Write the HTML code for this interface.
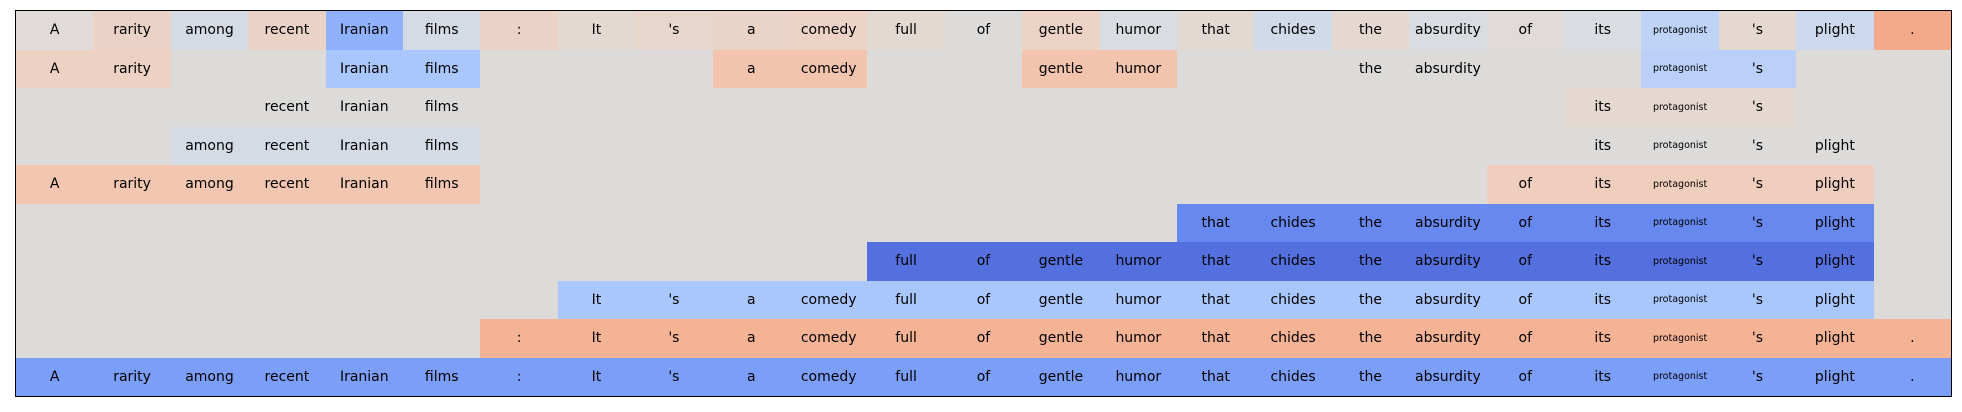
<!DOCTYPE html>
<html><head><meta charset="utf-8"><style>
html,body{margin:0;padding:0;background:#fff;width:1962px;height:412px;overflow:hidden}
#g{position:absolute;left:15px;top:10px;width:1937px;height:387px;border:1px solid #000;box-sizing:border-box;background:#dcdbda;display:grid;grid-template-columns:repeat(25,1fr);grid-template-rows:repeat(10,1fr)}
#g div{display:flex;align-items:center;justify-content:center;font-family:"DejaVu Sans","Liberation Sans",sans-serif;font-size:14px;color:#000;white-space:nowrap}
#g div.p{font-size:9.5px}
</style></head><body><div id="g">
<div style="grid-area:1/1;background:#e0dbd8">A</div>
<div style="grid-area:1/2;background:#ead3c6">rarity</div>
<div style="grid-area:1/3;background:#d5dbe5">among</div>
<div style="grid-area:1/4;background:#ead3c6">recent</div>
<div style="grid-area:1/5;background:#90b2fe">Iranian</div>
<div style="grid-area:1/6;background:#d5dbe5">films</div>
<div style="grid-area:1/7;background:#ead3c6">:</div>
<div style="grid-area:1/8;background:#e3d9d3">It</div>
<div style="grid-area:1/9;background:#e8d6cc">'s</div>
<div style="grid-area:1/10;background:#ead4c8">a</div>
<div style="grid-area:1/11;background:#ecd3c5">comedy</div>
<div style="grid-area:1/12;background:#e3d9d3">full</div>
<div style="grid-area:1/13;background:#dcdbda">of</div>
<div style="grid-area:1/14;background:#ecd3c5">gentle</div>
<div style="grid-area:1/15;background:#d9dce1">humor</div>
<div style="grid-area:1/16;background:#e3d9d3">that</div>
<div style="grid-area:1/17;background:#d0dae9">chides</div>
<div style="grid-area:1/18;background:#e5d8d1">the</div>
<div style="grid-area:1/19;background:#d9dce1">absurdity</div>
<div style="grid-area:1/20;background:#e0dbd8">of</div>
<div style="grid-area:1/21;background:#d9dce1">its</div>
<div class="p" style="grid-area:1/22;background:#bfd3f6">protagonist</div>
<div style="grid-area:1/23;background:#e5d8d1">'s</div>
<div style="grid-area:1/24;background:#cbd8ee">plight</div>
<div style="grid-area:1/25;background:#f5a98b">.</div>

<div style="grid-area:2/1;background:#edd1c2">A</div>
<div style="grid-area:2/2;background:#edd1c2">rarity</div>
<div style="grid-area:2/5;background:#aac7fd">Iranian</div>
<div style="grid-area:2/6;background:#aac7fd">films</div>
<div style="grid-area:2/10;background:#f2c4ae">a</div>
<div style="grid-area:2/11;background:#f2c4ae">comedy</div>
<div style="grid-area:2/14;background:#f2c4ae">gentle</div>
<div style="grid-area:2/15;background:#f2c4ae">humor</div>
<div style="grid-area:2/18">the</div>
<div style="grid-area:2/19">absurdity</div>
<div class="p" style="grid-area:2/22;background:#bad0f8">protagonist</div>
<div style="grid-area:2/23;background:#bad0f8">'s</div>

<div style="grid-area:3/4">recent</div>
<div style="grid-area:3/5">Iranian</div>
<div style="grid-area:3/6">films</div>
<div style="grid-area:3/21;background:#e5d8d1">its</div>
<div class="p" style="grid-area:3/22;background:#e5d8d1">protagonist</div>
<div style="grid-area:3/23;background:#e5d8d1">'s</div>

<div style="grid-area:4/3;background:#d5dbe5">among</div>
<div style="grid-area:4/4;background:#d5dbe5">recent</div>
<div style="grid-area:4/5;background:#d5dbe5">Iranian</div>
<div style="grid-area:4/6;background:#d5dbe5">films</div>
<div style="grid-area:4/21">its</div>
<div class="p" style="grid-area:4/22">protagonist</div>
<div style="grid-area:4/23">'s</div>
<div style="grid-area:4/24">plight</div>

<div style="grid-area:5/1;background:#f2c6b0">A</div>
<div style="grid-area:5/2;background:#f2c6b0">rarity</div>
<div style="grid-area:5/3;background:#f2c6b0">among</div>
<div style="grid-area:5/4;background:#f2c6b0">recent</div>
<div style="grid-area:5/5;background:#f2c6b0">Iranian</div>
<div style="grid-area:5/6;background:#f2c6b0">films</div>
<div style="grid-area:5/20;background:#efcebd">of</div>
<div style="grid-area:5/21;background:#efcebd">its</div>
<div class="p" style="grid-area:5/22;background:#efcebd">protagonist</div>
<div style="grid-area:5/23;background:#efcebd">'s</div>
<div style="grid-area:5/24;background:#efcebd">plight</div>

<div style="grid-area:6/16;background:#6788ee">that</div>
<div style="grid-area:6/17;background:#6788ee">chides</div>
<div style="grid-area:6/18;background:#6788ee">the</div>
<div style="grid-area:6/19;background:#6788ee">absurdity</div>
<div style="grid-area:6/20;background:#6788ee">of</div>
<div style="grid-area:6/21;background:#6788ee">its</div>
<div class="p" style="grid-area:6/22;background:#6788ee">protagonist</div>
<div style="grid-area:6/23;background:#6788ee">'s</div>
<div style="grid-area:6/24;background:#6788ee">plight</div>

<div style="grid-area:7/12;background:#5470de">full</div>
<div style="grid-area:7/13;background:#5470de">of</div>
<div style="grid-area:7/14;background:#5470de">gentle</div>
<div style="grid-area:7/15;background:#5470de">humor</div>
<div style="grid-area:7/16;background:#5470de">that</div>
<div style="grid-area:7/17;background:#5470de">chides</div>
<div style="grid-area:7/18;background:#5470de">the</div>
<div style="grid-area:7/19;background:#5470de">absurdity</div>
<div style="grid-area:7/20;background:#5470de">of</div>
<div style="grid-area:7/21;background:#5470de">its</div>
<div class="p" style="grid-area:7/22;background:#5470de">protagonist</div>
<div style="grid-area:7/23;background:#5470de">'s</div>
<div style="grid-area:7/24;background:#5470de">plight</div>

<div style="grid-area:8/8;background:#aac7fd">It</div>
<div style="grid-area:8/9;background:#aac7fd">'s</div>
<div style="grid-area:8/10;background:#aac7fd">a</div>
<div style="grid-area:8/11;background:#aac7fd">comedy</div>
<div style="grid-area:8/12;background:#aac7fd">full</div>
<div style="grid-area:8/13;background:#aac7fd">of</div>
<div style="grid-area:8/14;background:#aac7fd">gentle</div>
<div style="grid-area:8/15;background:#aac7fd">humor</div>
<div style="grid-area:8/16;background:#aac7fd">that</div>
<div style="grid-area:8/17;background:#aac7fd">chides</div>
<div style="grid-area:8/18;background:#aac7fd">the</div>
<div style="grid-area:8/19;background:#aac7fd">absurdity</div>
<div style="grid-area:8/20;background:#aac7fd">of</div>
<div style="grid-area:8/21;background:#aac7fd">its</div>
<div class="p" style="grid-area:8/22;background:#aac7fd">protagonist</div>
<div style="grid-area:8/23;background:#aac7fd">'s</div>
<div style="grid-area:8/24;background:#aac7fd">plight</div>

<div style="grid-area:9/7;background:#f5b396">:</div>
<div style="grid-area:9/8;background:#f5b396">It</div>
<div style="grid-area:9/9;background:#f5b396">'s</div>
<div style="grid-area:9/10;background:#f5b396">a</div>
<div style="grid-area:9/11;background:#f5b396">comedy</div>
<div style="grid-area:9/12;background:#f5b396">full</div>
<div style="grid-area:9/13;background:#f5b396">of</div>
<div style="grid-area:9/14;background:#f5b396">gentle</div>
<div style="grid-area:9/15;background:#f5b396">humor</div>
<div style="grid-area:9/16;background:#f5b396">that</div>
<div style="grid-area:9/17;background:#f5b396">chides</div>
<div style="grid-area:9/18;background:#f5b396">the</div>
<div style="grid-area:9/19;background:#f5b396">absurdity</div>
<div style="grid-area:9/20;background:#f5b396">of</div>
<div style="grid-area:9/21;background:#f5b396">its</div>
<div class="p" style="grid-area:9/22;background:#f5b396">protagonist</div>
<div style="grid-area:9/23;background:#f5b396">'s</div>
<div style="grid-area:9/24;background:#f5b396">plight</div>
<div style="grid-area:9/25;background:#f5b396">.</div>

<div style="grid-area:10/1;background:#7b9ff9">A</div>
<div style="grid-area:10/2;background:#7b9ff9">rarity</div>
<div style="grid-area:10/3;background:#7b9ff9">among</div>
<div style="grid-area:10/4;background:#7b9ff9">recent</div>
<div style="grid-area:10/5;background:#7b9ff9">Iranian</div>
<div style="grid-area:10/6;background:#7b9ff9">films</div>
<div style="grid-area:10/7;background:#7b9ff9">:</div>
<div style="grid-area:10/8;background:#7b9ff9">It</div>
<div style="grid-area:10/9;background:#7b9ff9">'s</div>
<div style="grid-area:10/10;background:#7b9ff9">a</div>
<div style="grid-area:10/11;background:#7b9ff9">comedy</div>
<div style="grid-area:10/12;background:#7b9ff9">full</div>
<div style="grid-area:10/13;background:#7b9ff9">of</div>
<div style="grid-area:10/14;background:#7b9ff9">gentle</div>
<div style="grid-area:10/15;background:#7b9ff9">humor</div>
<div style="grid-area:10/16;background:#7b9ff9">that</div>
<div style="grid-area:10/17;background:#7b9ff9">chides</div>
<div style="grid-area:10/18;background:#7b9ff9">the</div>
<div style="grid-area:10/19;background:#7b9ff9">absurdity</div>
<div style="grid-area:10/20;background:#7b9ff9">of</div>
<div style="grid-area:10/21;background:#7b9ff9">its</div>
<div class="p" style="grid-area:10/22;background:#7b9ff9">protagonist</div>
<div style="grid-area:10/23;background:#7b9ff9">'s</div>
<div style="grid-area:10/24;background:#7b9ff9">plight</div>
<div style="grid-area:10/25;background:#7b9ff9">.</div>
</div></body></html>
